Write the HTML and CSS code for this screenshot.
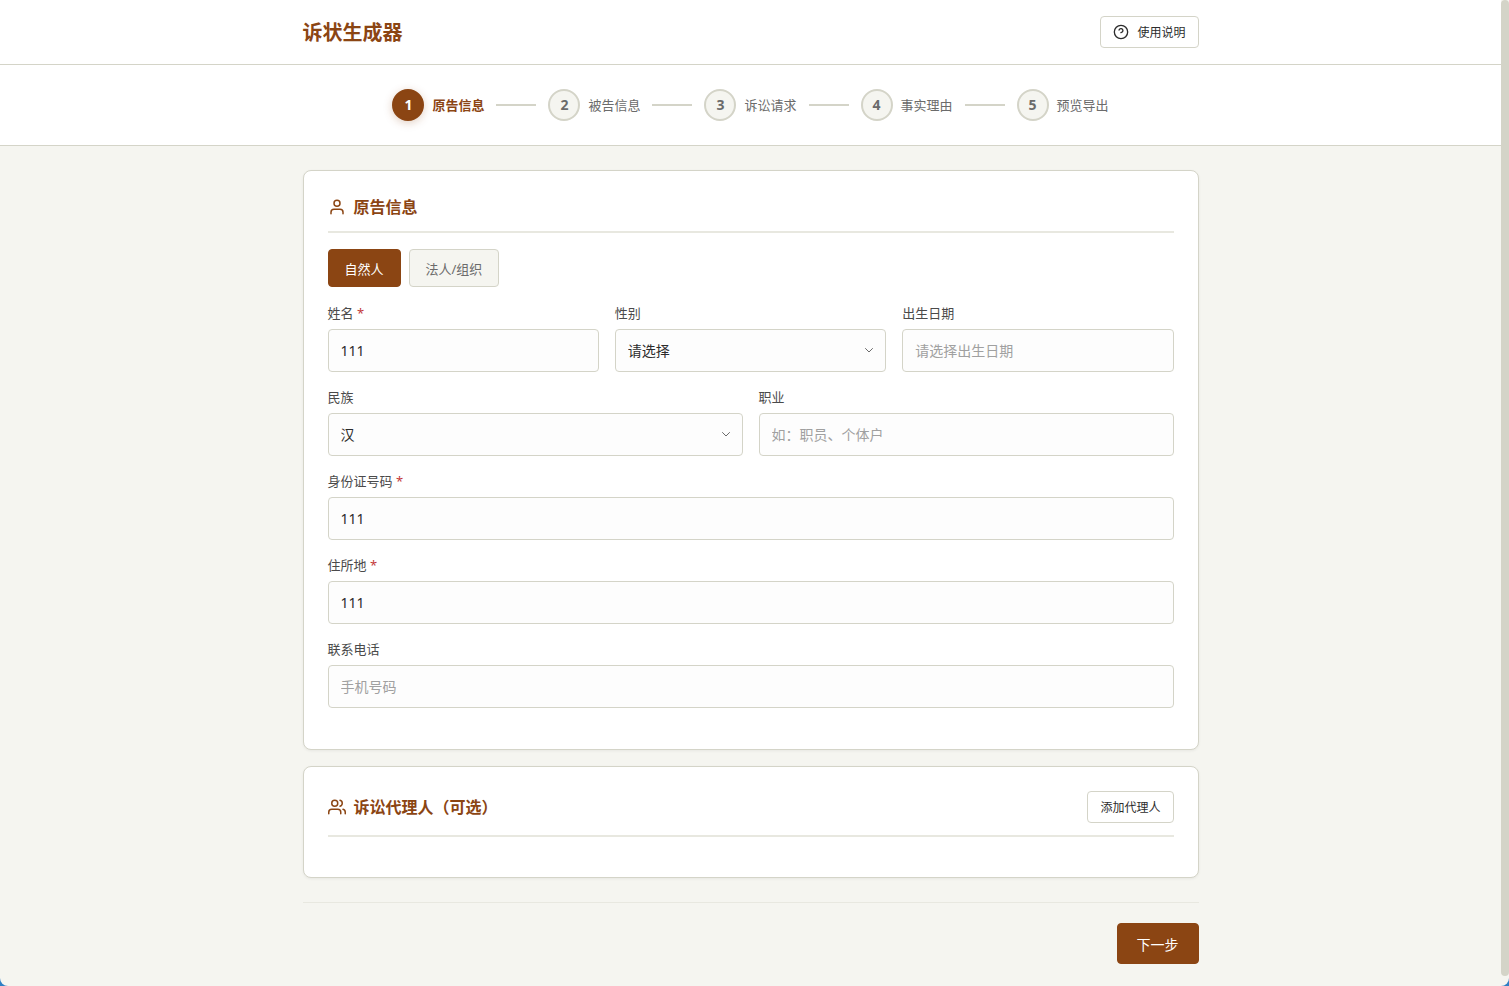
FILE: index.html
```html
<!DOCTYPE html>
<html lang="zh-CN">
<head>
  <meta charset="UTF-8">
  <meta name="viewport" content="width=device-width, initial-scale=1.0">
  <title>诉状生成器</title>
  <link rel="stylesheet" href="styles.css">
</head>
<body>
  <div class="app">
    <header class="header">
      <div class="container header-content">
        <h1 class="logo">诉状生成器</h1>
        <button type="button" class="btn btn-small">
          <svg class="icon-help" viewBox="0 0 24 24"><circle cx="12" cy="12" r="10"/><path d="M9.09 9a3 3 0 0 1 5.83 1c0 2-3 3-3 3"/></svg>
          使用说明
        </button>
      </div>
    </header>

    <nav class="steps">
      <div class="step active"><span class="step-number">1</span><span class="step-label">原告信息</span></div>
      <div class="step-line"></div>
      <div class="step"><span class="step-number">2</span><span class="step-label">被告信息</span></div>
      <div class="step-line"></div>
      <div class="step"><span class="step-number">3</span><span class="step-label">诉讼请求</span></div>
      <div class="step-line"></div>
      <div class="step"><span class="step-number">4</span><span class="step-label">事实理由</span></div>
      <div class="step-line"></div>
      <div class="step"><span class="step-number">5</span><span class="step-label">预览导出</span></div>
    </nav>

    <main class="container main">
      <section class="card">
        <div class="card-header">
          <h2 class="card-title">
            <svg class="icon-title" viewBox="0 0 24 24"><circle cx="12" cy="7" r="4"/><path d="M20 21v-2a4 4 0 0 0-4-4H8a4 4 0 0 0-4 4v2"/></svg>
            原告信息
          </h2>
        </div>
        <div class="tabs">
          <button type="button" class="tab active">自然人</button>
          <button type="button" class="tab">法人/组织</button>
        </div>
        <form class="form">
          <div class="form-row cols-3">
            <div class="field">
              <label for="name">姓名 <span class="required">*</span></label>
              <input type="text" id="name" value="111">
            </div>
            <div class="field">
              <label for="gender">性别</label>
              <div class="select">
                <select id="gender">
                  <option>请选择</option>
                  <option>男</option>
                  <option>女</option>
                </select>
                <svg class="icon-arrow" viewBox="0 0 24 24"><path d="m5 9 7 7 7-7"/></svg>
              </div>
            </div>
            <div class="field">
              <label for="birth">出生日期</label>
              <input type="text" id="birth" placeholder="请选择出生日期">
            </div>
          </div>
          <div class="form-row cols-2">
            <div class="field">
              <label for="nation">民族</label>
              <div class="select">
                <select id="nation">
                  <option>汉</option>
                  <option>回</option>
                  <option>满</option>
                </select>
                <svg class="icon-arrow" viewBox="0 0 24 24"><path d="m5 9 7 7 7-7"/></svg>
              </div>
            </div>
            <div class="field">
              <label for="job">职业</label>
              <input type="text" id="job" placeholder="如：职员、个体户">
            </div>
          </div>
          <div class="field">
            <label for="idcard">身份证号码 <span class="required">*</span></label>
            <input type="text" id="idcard" value="111">
          </div>
          <div class="field">
            <label for="address">住所地 <span class="required">*</span></label>
            <input type="text" id="address" value="111">
          </div>
          <div class="field">
            <label for="phone">联系电话</label>
            <input type="tel" id="phone" placeholder="手机号码">
          </div>
        </form>
      </section>

      <section class="card">
        <div class="card-header">
          <h2 class="card-title">
            <svg class="icon-title" viewBox="0 0 24 24"><path d="M17 21v-2a4 4 0 0 0-4-4H5a4 4 0 0 0-4 4v2"/><circle cx="9" cy="7" r="4"/><path d="M23 21v-2a4 4 0 0 0-3-3.87"/><path d="M16 3.13a4 4 0 0 1 0 7.75"/></svg>
            诉讼代理人（可选）
          </h2>
          <button type="button" class="btn btn-small">添加代理人</button>
        </div>
      </section>

      <footer class="actions">
        <button type="button" class="btn btn-primary">下一步</button>
      </footer>
    </main>
  </div>
  <div class="scrollbar"></div>
</body>
</html>
```
FILE: styles.css
```css
:root {
  --primary: #8b4513;
  --bg: #f5f5f0;
  --border: #d4d4c8;
  --border-light: #e8e8e0;
  --text: #2c2c2c;
  --text-label: #4a4a4a;
  --text-muted: #6b6b6b;
}
* {
  box-sizing: border-box;
  margin: 0;
  padding: 0;
}
html {
  background: #2f7fc4;
}
body {
  font-family: "Noto Sans", "Noto Sans CJK SC", sans-serif;
  font-size: 14px;
  line-height: 20px;
  color: var(--text);
}
button, input, select {
  font-family: inherit;
}
svg {
  fill: none;
  stroke: currentColor;
  stroke-width: 2;
  stroke-linecap: round;
  stroke-linejoin: round;
}
.app {
  min-height: 100vh;
  padding-right: 8px;
  background: var(--bg);
  border-radius: 0 0 8px 8px;
}
.container {
  max-width: 896px;
  margin: 0 auto;
}

/* header */
.header {
  background: #fff;
  border-bottom: 1px solid var(--border);
}
.header-content {
  display: flex;
  align-items: center;
  justify-content: space-between;
  height: 64px;
}
.logo {
  padding-top: 2px;
  font-size: 20px;
  line-height: 32px;
  font-weight: 700;
  color: var(--primary);
}

/* buttons */
.btn {
  display: inline-flex;
  align-items: center;
  justify-content: center;
  gap: 8px;
  border: 1px solid var(--border);
  border-radius: 4px;
  background: #fff;
  color: var(--text);
  cursor: pointer;
}
.btn-small {
  height: 32px;
  padding: 0 12px;
  font-size: 12px;
}
.btn-primary {
  height: 41px;
  padding: 0 19px;
  font-size: 14px;
  background: var(--primary);
  border-color: var(--primary);
  color: #fff;
}
.icon-help {
  width: 16px;
  height: 16px;
}

/* steps */
.steps {
  display: flex;
  align-items: center;
  justify-content: center;
  gap: 12px;
  padding: 24px 0;
  background: #fff;
  border-bottom: 1px solid var(--border);
}
.step {
  display: flex;
  align-items: center;
  gap: 8px;
  font-size: 13px;
  color: var(--text-muted);
}
.step-number {
  display: flex;
  align-items: center;
  justify-content: center;
  width: 32px;
  height: 32px;
  border: 2px solid var(--border);
  border-radius: 50%;
  background: var(--bg);
  font-size: 14px;
  font-weight: 700;
}
.step.active {
  color: var(--primary);
  font-weight: 600;
}
.step.active .step-number {
  background: var(--primary);
  border-color: var(--primary);
  color: #fff;
  box-shadow: 0 2px 8px rgba(139, 69, 19, 0.25);
}
.step-line {
  width: 40px;
  height: 2px;
  background: var(--border);
}

/* cards */
.main {
  padding: 24px 0 20px;
}
.card {
  margin-bottom: 16px;
  padding: 24px;
  background: #fff;
  border: 1px solid var(--border);
  border-radius: 8px;
  box-shadow: 0 1px 3px rgba(0, 0, 0, 0.06);
}
.card-header {
  display: flex;
  align-items: center;
  justify-content: space-between;
  margin-bottom: 16px;
  padding-bottom: 12px;
  border-bottom: 2px solid var(--border-light);
}
.card-title {
  display: flex;
  align-items: center;
  gap: 8px;
  font-size: 16px;
  line-height: 24px;
  font-weight: 600;
  color: var(--primary);
}
.icon-title {
  width: 18px;
  height: 18px;
}

/* tabs */
.tabs {
  display: flex;
  gap: 8px;
  margin-bottom: 16px;
}
.tab {
  height: 38px;
  padding: 0 16px;
  border: 1px solid var(--border);
  border-radius: 4px;
  background: var(--bg);
  font-size: 13px;
  color: var(--text-muted);
  cursor: pointer;
}
.tab.active {
  background: var(--primary);
  border-color: var(--primary);
  color: #fff;
}

/* form */
.form {
  display: grid;
  gap: 15px;
  padding-bottom: 17px;
}
.form-row {
  display: grid;
  gap: 16px;
}
.cols-3 {
  grid-template-columns: repeat(3, 1fr);
}
.cols-2 {
  grid-template-columns: repeat(2, 1fr);
}
.field label {
  display: block;
  margin-bottom: 6px;
  font-size: 13px;
  color: var(--text-label);
}
.required {
  color: #c43a3a;
}
.field input,
.field select {
  display: block;
  width: 100%;
  height: 43px;
  padding: 0 12px;
  border: 1px solid var(--border);
  border-radius: 4px;
  background: #fdfdfd;
  font-size: 14px;
  color: var(--text);
  appearance: none;
}
.field input::placeholder {
  color: #a0a0a0;
}
.field input:focus,
.field select:focus {
  outline: none;
  border-color: var(--primary);
}
.select {
  position: relative;
}
.icon-arrow {
  position: absolute;
  top: 15px;
  right: 11px;
  width: 12px;
  height: 12px;
  color: var(--text-muted);
  pointer-events: none;
}

.actions {
  display: flex;
  justify-content: flex-end;
  margin-top: 24px;
  padding-top: 20px;
  border-top: 1px solid var(--border-light);
}

.scrollbar {
  position: fixed;
  top: 0;
  right: 0;
  bottom: 10px;
  width: 8px;
  border-radius: 4px;
  background: var(--border);
}
```
